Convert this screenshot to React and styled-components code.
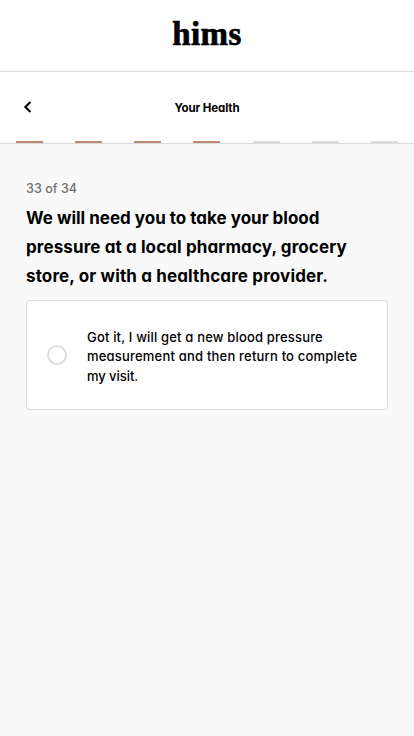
import React from "react";
import styled, { createGlobalStyle } from "styled-components";

const GlobalStyle = createGlobalStyle`
  * { box-sizing: border-box; }
  body {
    margin: 0;
    background: #f9f9f9;
    color: #000;
    font-family: Inter, "Open Sans", sans-serif;
    font-feature-settings: "cv11" 1;
  }
`;

const Page = styled.div`
  display: flex;
  flex-direction: column;
  min-height: 100vh;
`;

const BrandBar = styled.header`
  height: 72px;
  display: flex;
  justify-content: center;
  background: #fff;
  border-bottom: 1px solid #dcdcdc;
`;

const Brand = styled.span`
  font: bold 33px/69px "Liberation Serif", serif;
  letter-spacing: 0.4px;
  -webkit-text-stroke: 0.7px #000;
`;

const StepHeader = styled.div`
  height: 72px;
  display: flex;
  flex-direction: column;
  background: #fff;
  border-bottom: 1px solid #dcdcdc;
`;

const TitleRow = styled.div`
  flex: 1;
  display: grid;
  grid-template-columns: 32px 1fr 32px;
  align-items: center;
  padding: 2px 16px 0;
`;

const BackButton = styled.button`
  display: flex;
  padding: 0 0 2px 7px;
  border: 0;
  background: none;
`;

const SectionTitle = styled.h1`
  margin: 0;
  text-align: center;
  font-size: 11.5px;
  font-weight: 700;
  line-height: 18px;
  letter-spacing: -0.1px;
`;

const Progress = styled.div`
  display: flex;
  justify-content: space-between;
  padding: 0 16px;
`;

const Segment = styled.span`
  width: 27px;
  height: 2px;
  background: ${(p) => (p.$done ? "#bf8a74" : "#dcdcdc")};
`;

const Content = styled.main`
  padding: 35px 26px 0;
`;

const Counter = styled.div`
  color: #717171;
  font-size: 12.5px;
  font-weight: 500;
  line-height: 20px;
  letter-spacing: 0.05px;
`;

const Question = styled.h2`
  margin: 5px 0 9px;
  font-size: 17px;
  font-weight: 650;
  line-height: 29px;
`;

const Line = styled.span`
  display: block;
  white-space: nowrap;
  letter-spacing: ${(p) => p.$tracking}px;
`;

const Option = styled.label`
  display: flex;
  align-items: center;
  height: 110px;
  padding: 4px 20px 0;
  gap: 20px;
  background: #fff;
  border: 1px solid #dcdcdc;
  border-radius: 4px;
`;

const Radio = styled.input.attrs({ type: "radio" })`
  appearance: none;
  flex: none;
  width: 20px;
  height: 20px;
  margin: 0 0 4px;
  border: 2px solid #dcdcdc;
  border-radius: 50%;
  background: #fff;
`;

const OptionText = styled.span`
  font-size: 13px;
  font-weight: 550;
  line-height: 19.5px;
`;

const questionLines = [
  ["We will need you to take your blood", 0],
  ["pressure at a local pharmacy, grocery", 0.11],
  ["store, or with a healthcare provider.", 0.14],
];

const answerLines = [
  ["Got it, I will get a new blood pressure", 0.17],
  ["measurement and then return to complete", 0.2],
  ["my visit.", -0.06],
];

const segments = [true, true, true, true, false, false, false];

const renderLines = (lines) =>
  lines.map(([text, tracking]) => (
    <Line key={text} $tracking={tracking}>
      {text}
    </Line>
  ));

export default function App() {
  return (
    <Page>
      <GlobalStyle />
      <BrandBar>
        <Brand>hims</Brand>
      </BrandBar>
      <StepHeader>
        <TitleRow>
          <BackButton aria-label="Back">
            <svg width="10" height="12" viewBox="0 0 10 12" fill="none">
              <path d="M7.4 1.1 2.4 6l5 4.9" stroke="#000" strokeWidth="2.1" />
            </svg>
          </BackButton>
          <SectionTitle>Your Health</SectionTitle>
        </TitleRow>
        <Progress>
          {segments.map((done, i) => (
            <Segment key={i} $done={done} />
          ))}
        </Progress>
      </StepHeader>
      <Content>
        <Counter>33 of 34</Counter>
        <Question>{renderLines(questionLines)}</Question>
        <Option>
          <Radio name="answer" />
          <OptionText>{renderLines(answerLines)}</OptionText>
        </Option>
      </Content>
    </Page>
  );
}
